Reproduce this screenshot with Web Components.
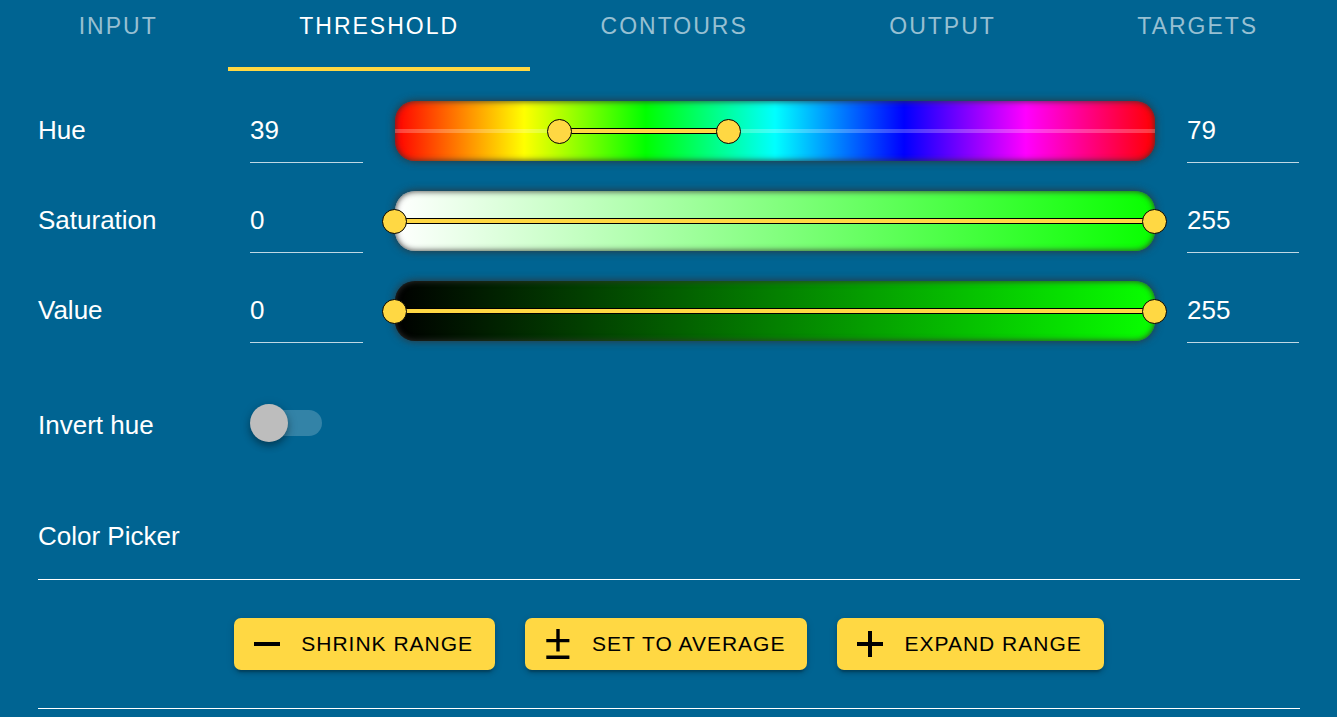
<!DOCTYPE html>
<html lang="en">
<head>
<meta charset="utf-8">
<meta name="viewport" content="width=device-width, initial-scale=1">
<title>Threshold</title>
<style>
  html { background: #006492; }
  body {
    margin: 0;
    min-height: 100vh;
    background: #006492;
    color: #fff;
    font: 26px/30px "Liberation Sans", Arial, sans-serif;
  }
</style>
</head>
<body>
<threshold-page></threshold-page>

<script>
function define(name, markup, setup) {
  const template = document.createElement('template');
  template.innerHTML = markup;
  customElements.define(name, class extends HTMLElement {
    constructor() {
      super();
      this.attachShadow({ mode: 'open' }).append(template.content.cloneNode(true));
    }
    connectedCallback() {
      if (setup && !this.ready) {
        this.ready = true;
        setup(this, this.shadowRoot);
      }
    }
  });
}

define('pipeline-tab', `
  <style>
    :host { display: flex; flex: 1 0 auto; }
    button {
      flex: 1; height: 71px; box-sizing: border-box;
      padding: 0 24px 14px; margin: 0;
      border: 0; border-bottom: 4px solid transparent;
      background: none; color: rgba(255, 255, 255, .6);
      font: 23px/53px "Liberation Sans", Arial, sans-serif;
      letter-spacing: 2px; text-transform: uppercase; cursor: pointer;
    }
    button[aria-selected="true"] { color: #fff; border-bottom-color: #ffd843; }
  </style>
  <button type="button" role="tab" aria-selected="false"><slot></slot></button>
`, (host, root) => {
  root.querySelector('button').setAttribute('aria-selected', host.hasAttribute('selected'));
});

define('pipeline-tabs', `
  <style>
    :host { display: flex; padding: 0 8px; }
  </style>
  <slot></slot>
`, host => host.setAttribute('role', 'tablist'));

define('range-row', `
  <style>
    :host {
      display: grid;
      grid-template-columns: 180px 113px minmax(0, 1fr) 112px;
      column-gap: 32px; align-items: start;
    }
    label { line-height: 58px; white-space: nowrap; }
    input[type="number"] {
      width: 100%; height: 62px; box-sizing: border-box;
      margin: 0; padding: 0 0 3px; border: 0; border-radius: 0;
      border-bottom: 1px solid rgba(255, 255, 255, .75);
      background: none; color: inherit;
      font: inherit; outline: none; appearance: textfield;
    }
    input[type="number"]::-webkit-inner-spin-button { appearance: none; margin: 0; }
    .track {
      position: relative; height: 60px; border-radius: 20px;
      background: var(--track);
      box-shadow: 0 0 9px #333, inset 0 0 6px #333;
    }
    .rail, .fill { position: absolute; top: 28px; height: 4px; pointer-events: none; }
    .rail { left: 0; right: 0; background: rgba(255, 255, 255, .24); }
    .fill {
      left: var(--from); right: var(--to);
      background: #ffd843; box-shadow: 0 0 0 1px #000;
    }
    input[type="range"] {
      position: absolute; top: 0; left: -13px;
      width: calc(100% + 25px); height: 60px; margin: 0;
      appearance: none; background: none; pointer-events: none; outline: none;
    }
    input[type="range"]::-webkit-slider-thumb {
      appearance: none; box-sizing: border-box;
      width: 25px; height: 25px; border: 1px solid #000; border-radius: 50%;
      background: #ffd843; pointer-events: auto; cursor: pointer;
    }
  </style>
  <label for="low"><slot></slot></label>
  <input id="low" type="number">
  <div class="track">
    <div class="rail"></div>
    <div class="fill"></div>
    <input class="low" type="range">
    <input class="high" type="range">
  </div>
  <input id="high" type="number">
`, (host, root) => {
  const $ = s => root.querySelector(s);
  const max = +host.getAttribute('max');
  const name = host.textContent.trim();
  const boxes = [$('#low'), $('#high')];
  const thumbs = [$('.low'), $('.high')];
  const values = [+host.getAttribute('low'), +host.getAttribute('high')];
  const render = () => {
    values.forEach((v, i) => { boxes[i].value = v; thumbs[i].value = v; });
    $('.track').style.setProperty('--from', values[0] / max * 100 + '%');
    $('.track').style.setProperty('--to', 100 - values[1] / max * 100 + '%');
  };
  [0, 1].forEach(i => {
    for (const field of [boxes[i], thumbs[i]]) {
      field.min = 0;
      field.max = max;
      field.setAttribute('aria-label', name + (i ? ' maximum' : ' minimum'));
      field.addEventListener(field.type === 'range' ? 'input' : 'change', () => {
        const v = Math.max(0, Math.min(max, +field.value));
        values[i] = i ? Math.max(v, values[0]) : Math.min(v, values[1]);
        render();
      });
    }
  });
  render();
});

define('switch-row', `
  <style>
    :host {
      display: grid; grid-template-columns: 180px 72px;
      column-gap: 32px; align-items: center;
    }
    label { line-height: 42px; white-space: nowrap; }
    :host { align-items: start; }
    input {
      appearance: none; display: flex; align-items: center;
      width: 72px; height: 38px; margin: 0; cursor: pointer;
    }
    input::after {
      content: ""; flex: 1; height: 26px; margin-left: -34px;
      border-radius: 13px; background: rgba(255, 255, 255, .2);
    }
    input::before {
      content: ""; position: relative; z-index: 1;
      width: 38px; height: 38px; border-radius: 50%; background: #bdbdbd;
      box-shadow: 0 4px 7px rgba(0, 0, 0, .3), 0 2px 12px rgba(0, 0, 0, .14);
    }
    input:checked::before { left: 34px; background: #ffd843; }
  </style>
  <label for="toggle"><slot></slot></label>
  <input id="toggle" type="checkbox" role="switch">
`);

define('range-button', `
  <style>
    :host { display: block; }
    button {
      display: flex; align-items: center; gap: 12px;
      height: 52px; margin: 0; padding: 0 22px 0 11px;
      border: 0; border-radius: 7px;
      background: #ffd843; color: #000;
      font: 21px/52px "Liberation Sans", Arial, sans-serif;
      letter-spacing: 1px; text-transform: uppercase; white-space: nowrap;
      box-shadow: 0 5px 2px -3px rgba(0, 0, 0, .2), 0 3px 4px rgba(0, 0, 0, .14), 0 2px 9px rgba(0, 0, 0, .12);
      cursor: pointer;
    }
    svg { width: 44px; height: 44px; flex: none; fill: currentColor; }
  </style>
  <button type="button">
    <svg viewBox="0 0 44 44" aria-hidden="true"><path/></svg>
    <span><slot></slot></span>
  </button>
`, (host, root) => {
  const shapes = {
    minus: 'M9 20H35V24H9Z',
    plusminus: 'M10.3 17H20.3V7H23.7V17H33.4V20.3H23.7V29.5H20.3V20.3H10.3ZM10.3 33.6H33.4V37H10.3Z',
    plus: 'M9 20H20V9H24V20H35V24H24V35H20V24H9Z'
  };
  root.querySelector('path').setAttribute('d', shapes[host.getAttribute('icon')]);
});

define('picker-section', `
  <style>
    :host { display: block; }
    h2 { margin: 0; padding-bottom: 28px; font-size: 26px; line-height: 30px; font-weight: 400; }
    .actions {
      display: flex; flex-wrap: wrap; justify-content: center; gap: 30px;
      padding: 38px 0; border: solid #fff; border-width: 1px 0;
    }
  </style>
  <h2><slot name="title"></slot></h2>
  <div class="actions"><slot></slot></div>
`);

define('threshold-page', `
  <style>
    :host { display: block; }
    main { padding: 30px 37px 8px 38px; }
    .ranges { display: grid; gap: 28px; padding-right: 1px; }
    .hue { --track: linear-gradient(to right, #f00 0%, #ff0 17%, #0f0 33%, #0ff 50%, #00f 67%, #f0f 83%, #f00 100%); }
    .saturation { --track: linear-gradient(to right, #fff, #08ff00); }
    .value { --track: linear-gradient(to right, #000, #08ff00); }
    switch-row { margin-top: 61px; }
    picker-section { margin-top: 75px; }
  </style>
  <pipeline-tabs>
    <pipeline-tab>Input</pipeline-tab>
    <pipeline-tab selected>Threshold</pipeline-tab>
    <pipeline-tab>Contours</pipeline-tab>
    <pipeline-tab>Output</pipeline-tab>
    <pipeline-tab>Targets</pipeline-tab>
  </pipeline-tabs>
  <main>
    <div class="ranges">
      <range-row class="hue" max="180" low="39" high="79">Hue</range-row>
      <range-row class="saturation" max="255" low="0" high="255">Saturation</range-row>
      <range-row class="value" max="255" low="0" high="255">Value</range-row>
    </div>
    <switch-row>Invert hue</switch-row>
    <picker-section>
      <span slot="title">Color Picker</span>
      <range-button icon="minus">Shrink range</range-button>
      <range-button icon="plusminus">Set to average</range-button>
      <range-button icon="plus">Expand range</range-button>
    </picker-section>
  </main>
`);
</script>
</body>
</html>
